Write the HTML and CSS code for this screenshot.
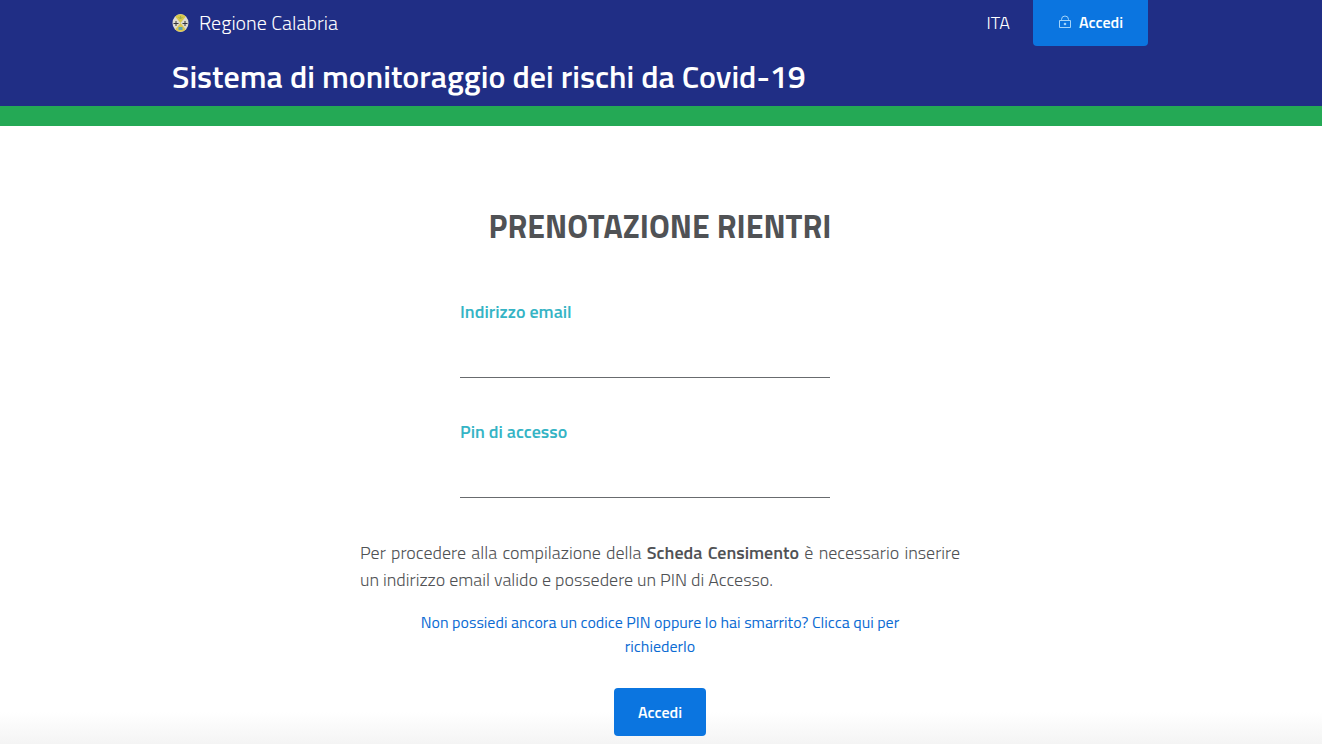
FILE: index.html
```html
<!DOCTYPE html>
<html lang="it">
<head>
<meta charset="utf-8">
<meta name="viewport" content="width=device-width, initial-scale=1">
<title>Sistema di monitoraggio dei rischi da Covid-19</title>
<link rel="stylesheet" href="styles.css">
</head>
<body>
<header class="header">
  <div class="container">
    <div class="topbar">
      <a class="brand" href="#">
        <svg class="brand-logo" viewBox="0 0 16 20" aria-hidden="true">
          <ellipse cx="8" cy="11" rx="8" ry="9" fill="#dedbd0"/>
          <path d="M2.6 4.4Q8 0 13.4 4.4L8 11z" fill="#d9c94a"/>
          <path d="M2.6 17.6Q8 22 13.4 17.6L8 11z" fill="#dcc64e"/>
          <path d="M8 4v3M6 5l2 2 2-2" stroke="#a0b04c" fill="none"/>
          <path d="M6 15h4v3H6z" fill="#5ba4b2"/>
          <path d="M3.500 9v5M1 11.500h5M12.500 9v5M10 11.500h5" stroke="#34343a"/>
        </svg>
        <span>Regione Calabria</span>
      </a>
      <div class="actions">
        <a class="language" href="#">ITA</a>
        <button class="login" type="button">
          <svg class="lock" viewBox="0 0 14 14" aria-hidden="true">
            <path d="M1.500 5.500h11v7h-11zM3.500 5.500V4.500a3.500 3.500 0 0 1 7 0v1" fill="none" stroke="#a3d4fa"/>
            <circle cx="7" cy="9" r="1.300" fill="#a3d4fa"/>
          </svg>
          <span>Accedi</span>
        </button>
      </div>
    </div>
    <h1 class="site-title">Sistema di monitoraggio dei rischi da Covid-19</h1>
  </div>
</header>
<main class="main">
  <h2 class="page-title">PRENOTAZIONE RIENTRI</h2>
  <form class="form">
    <div class="fields">
      <div class="field">
        <label for="email">Indirizzo email</label>
        <input id="email" type="email">
      </div>
      <div class="field">
        <label for="pin">Pin di accesso</label>
        <input id="pin" type="password">
      </div>
    </div>
    <p class="info">Per procedere alla compilazione della <strong>Scheda Censimento</strong> è necessario inserire un indirizzo email valido e possedere un PIN di Accesso.</p>
    <a class="request" href="#">Non possiedi ancora un codice PIN oppure lo hai smarrito? Clicca qui per richiederlo</a>
    <button class="submit" type="submit">Accedi</button>
  </form>
</main>
</body>
</html>
```
FILE: styles.css
```css
* {
  box-sizing: border-box;
}

body {
  margin: 0;
  min-height: 100vh;
  display: flex;
  flex-direction: column;
  background: #fff;
  color: #505255;
  font-family: "Titillium Web", Roboto, sans-serif;
  font-weight: 300;
}

a {
  text-decoration: none;
}

button {
  border: 0;
  background: #0b75e0;
  color: #fff;
  font-family: inherit;
  font-size: 16px;
  font-weight: 600;
  cursor: pointer;
}

.header {
  padding-right: 2px;
  background: #202e85;
  border-bottom: 20px solid #24a955;
  color: #fff;
}

.container {
  width: 100%;
  max-width: 1008px;
  margin: 0 auto;
  padding: 0 16px;
}

.topbar {
  display: flex;
  align-items: flex-start;
  justify-content: space-between;
}

.brand,
.language {
  display: flex;
  align-items: center;
  gap: 10px;
  height: 44px;
  color: #fff;
  font-size: 20px;
}

.brand-logo {
  width: 17px;
  height: 20px;
}

.actions {
  display: flex;
  gap: 23px;
}

.language {
  font-size: 18px;
}

.login {
  display: flex;
  align-items: center;
  justify-content: center;
  gap: 7px;
  min-width: 115px;
  height: 46px;
  padding-bottom: 3px;
  border-radius: 0 0 4px 4px;
}

.lock {
  width: 14px;
  height: 14px;
}

.site-title {
  margin: 0;
  padding: 10px 0;
  font-size: 32px;
  font-weight: 600;
  line-height: 40px;
}

.main {
  flex: 1;
  padding: 80px 18px 8px 16px;
  background: linear-gradient(to top, #f4f4f4, #fff 32px);
}

.page-title {
  margin: 0 0 54px;
  text-align: center;
  font-size: 32px;
  font-weight: 700;
  line-height: 40px;
}

.form {
  display: flex;
  flex-direction: column;
  align-items: center;
  max-width: 600px;
  margin: 0 auto;
}

.fields {
  display: flex;
  flex-direction: column;
  gap: 42px;
  width: 100%;
  padding: 0 130px 0 100px;
}

.field {
  display: flex;
  flex-direction: column;
  gap: 14px;
}

.field label {
  color: #35b4c5;
  font-size: 18px;
  font-weight: 600;
  line-height: 24px;
}

.field input {
  width: 100%;
  height: 40px;
  padding: 0 8px;
  border: 0;
  border-bottom: 1px solid #686b6e;
  background: transparent;
  font: inherit;
}

.info {
  margin: 41px 0 17px;
  font-size: 18px;
  line-height: 27px;
  text-align: justify;
}

.info strong {
  font-weight: 600;
}

.request {
  max-width: 500px;
  margin-bottom: 30px;
  color: #0b6bd3;
  font-size: 16px;
  font-weight: 400;
  line-height: 24px;
  text-align: center;
}

.submit {
  min-width: 92px;
  height: 48px;
  border-radius: 4px;
}
```
